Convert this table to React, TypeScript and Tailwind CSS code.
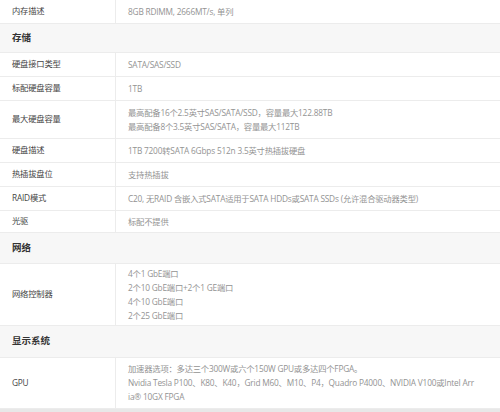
import React from "react";

type Row =
  | { kind: "section"; title: string; h: string }
  | { kind: "row"; label: string; lines: string[]; h: string };

const rows: Row[] = [
  { kind: "row", label: "内存描述", lines: ["8GB RDIMM, 2666MT/s, 单列"], h: "h-[24px]" },
  { kind: "section", title: "存储", h: "h-[29px]" },
  { kind: "row", label: "硬盘接口类型", lines: ["SATA/SAS/SSD"], h: "h-[24px]" },
  { kind: "row", label: "标配硬盘容量", lines: ["1TB"], h: "h-[24px]" },
  {
    kind: "row",
    label: "最大硬盘容量",
    lines: ["最高配备16个2.5英寸SAS/SATA/SSD，容量最大122.88TB", "最高配备8个3.5英寸SAS/SATA，容量最大112TB"],
    h: "h-[38px]",
  },
  { kind: "row", label: "硬盘描述", lines: ["1TB 7200转SATA 6Gbps 512n 3.5英寸热插拔硬盘"], h: "h-[24px]" },
  { kind: "row", label: "热插拔盘位", lines: ["支持热插拔"], h: "h-[24px]" },
  {
    kind: "row",
    label: "RAID模式",
    lines: ["C20, 无RAID 含嵌入式SATA适用于SATA HDDs或SATA SSDs (允许混合驱动器类型)"],
    h: "h-[24px]",
  },
  { kind: "row", label: "光驱", lines: ["标配不提供"], h: "h-[22px]" },
  { kind: "section", title: "网络", h: "h-[31px]" },
  {
    kind: "row",
    label: "网络控制器",
    lines: ["4个1 GbE端口", "2个10 GbE端口+2个1 GE端口", "4个10 GbE端口", "2个25 GbE端口"],
    h: "h-[62px]",
  },
  { kind: "section", title: "显示系统", h: "h-[32px]" },
  {
    kind: "row",
    label: "GPU",
    lines: [
      "加速器选项：多达三个300W或六个150W GPU或多达四个FPGA。",
      "Nvidia Tesla P100、K80、K40，Grid M60、M10、P4，Quadro P4000、NVIDIA V100或Intel Arr",
      "ia® 10GX FPGA",
    ],
    h: "h-[51px]",
  },
];

export default function App() {
  return (
    <div
      className="w-[500px] h-[412px] overflow-hidden bg-white"
      style={{ fontFamily: '"Open Sans", "Noto Sans CJK SC", sans-serif' }}
    >
      <div className="flex flex-col">
        {rows.map((r, i) =>
          r.kind === "section" ? (
            <div
              key={i}
              className={`${r.h} flex items-center pl-[12px] bg-[#f7f7f7] border-b border-[#ececec] text-[9.5px] font-bold text-[#333]`}
            >
              {r.title}
            </div>
          ) : (
            <div key={i} className={`${r.h} flex border-b border-[#ececec]`}>
              <div className="w-[116px] shrink-0 flex items-center pl-[12px] border-r border-[#ececec] text-[8.3px] tracking-[-0.2px] text-[#444]">
                {r.label}
              </div>
              <div className="flex-1 flex flex-col justify-center pl-[12px] text-[8.3px] tracking-[-0.2px] leading-[14px] text-[#939393] whitespace-nowrap">
                {r.lines.map((l, j) => (
                  <div key={j}>{l}</div>
                ))}
              </div>
            </div>
          )
        )}
        <div className="h-[4px] bg-[#e8e8e8]" />
      </div>
    </div>
  );
}
